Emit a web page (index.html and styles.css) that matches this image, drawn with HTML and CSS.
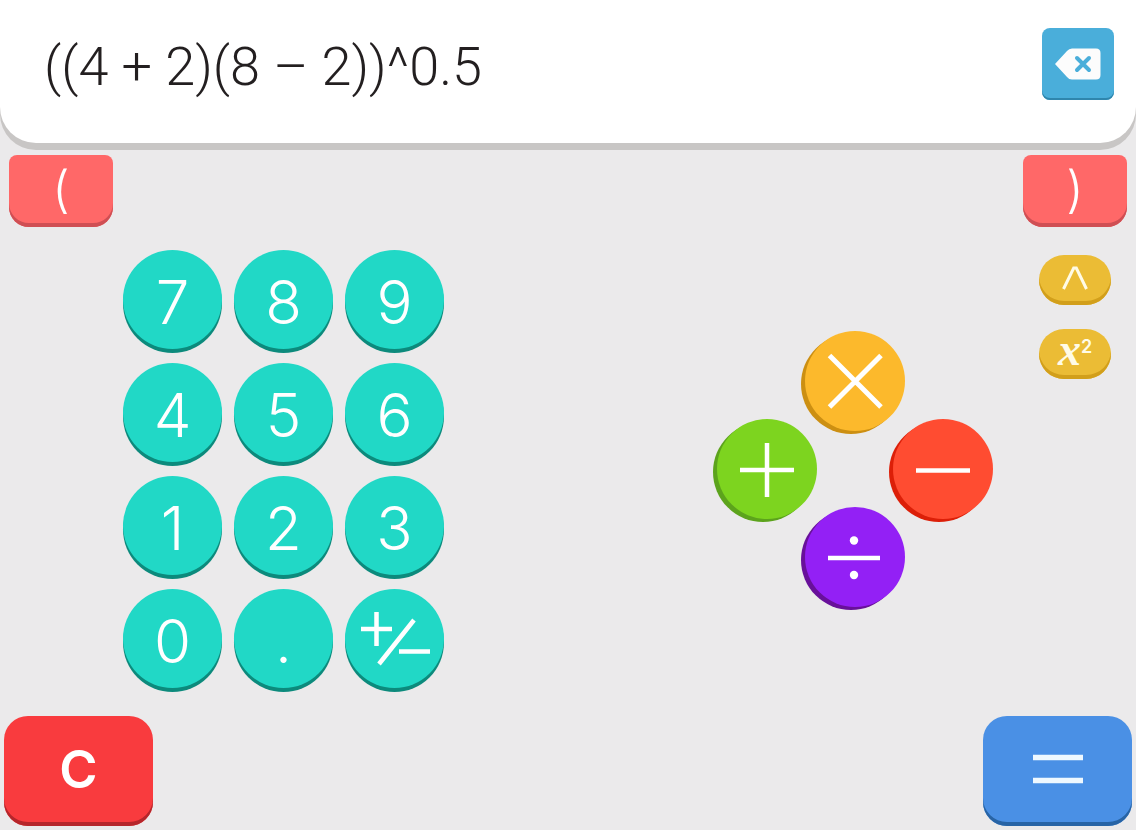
FILE: index.html
```html
<!DOCTYPE html>
<html lang="en">
<head>
  <meta charset="utf-8">
  <meta name="viewport" content="width=device-width, initial-scale=1">
  <title>Calculator</title>
  <link rel="stylesheet" href="styles.css">
</head>
<body>
  <header class="display">
    <input class="expression" type="text" value="((4 + 2)(8 – 2))^0.5" aria-label="Expression">
    <button class="backspace" aria-label="Delete">
      <svg width="46" height="32" viewBox="0 0 46 32">
        <path d="M0 16L12 3Q14 0.500 17 0.500H41Q45.500 0.500 45.500 5V27Q45.500 31.500 41 31.500H17Q14 31.500 12 29Z" fill="#fcfcfc"/>
        <path d="M22 10L34 22M34 10L22 22" stroke="#4aaeda" stroke-width="4" stroke-linecap="round"/>
      </svg>
    </button>
  </header>

  <main class="board">
    <button class="paren">(</button>

    <div class="pads">
      <div class="keypad">
        <button class="key">7</button>
        <button class="key">8</button>
        <button class="key">9</button>
        <button class="key">4</button>
        <button class="key">5</button>
        <button class="key">6</button>
        <button class="key">1</button>
        <button class="key">2</button>
        <button class="key">3</button>
        <button class="key">0</button>
        <button class="key">.</button>
        <button class="key" aria-label="Plus or minus">
          <svg width="72" height="56" viewBox="0 0 72 56">
            <path d="M2 16H33M17.500 -1V33M40 38.500H71M55 7L20 51" stroke="#fff" stroke-width="4.500" fill="none"/>
          </svg>
        </button>
      </div>

      <div class="operators">
        <button class="op times" aria-label="Multiply">
          <svg width="56" height="56" viewBox="0 0 56 56">
            <path d="M2.500 2.500L54 54M54 2.500L2.500 54" stroke="#fff" stroke-width="5"/>
          </svg>
        </button>
        <button class="op plus" aria-label="Add">
          <svg width="56" height="56" viewBox="0 0 56 56">
            <path d="M1 29H55M28 2V56" stroke="#fff" stroke-width="4.500"/>
          </svg>
        </button>
        <button class="op minus" aria-label="Subtract">
          <svg width="56" height="56" viewBox="0 0 56 56">
            <path d="M1 29.500H55" stroke="#fff" stroke-width="4.500"/>
          </svg>
        </button>
        <button class="op divide" aria-label="Divide">
          <svg width="56" height="56" viewBox="0 0 56 56">
            <path d="M1 29H53" stroke="#fff" stroke-width="4.500"/>
            <circle cx="27" cy="11.500" r="4.200" fill="#fff"/>
            <circle cx="27" cy="46" r="4.200" fill="#fff"/>
          </svg>
        </button>
      </div>
    </div>

    <div class="side">
      <button class="paren">)</button>
      <div class="powers">
        <button class="power" aria-label="Power">
          <svg width="26" height="24" viewBox="0 0 26 24">
            <path d="M1.500 23L11.700 2H14.300L24.500 23" stroke="#fffbe6" stroke-width="3" fill="none"/>
          </svg>
        </button>
        <button class="power"><i>x</i><sup>2</sup></button>
      </div>
    </div>
  </main>

  <footer class="actions">
    <button class="action clear">C</button>
    <button class="action equals" aria-label="Equals">
      <svg width="52" height="30" viewBox="0 0 52 30">
        <path d="M1 3.500H51M1 26.500H51" stroke="#eef8ff" stroke-width="5.500"/>
      </svg>
    </button>
  </footer>
</body>
</html>
```
FILE: styles.css
```css
* {
  box-sizing: border-box;
}
body {
  margin: 0;
  min-height: 100vh;
  display: flex;
  flex-direction: column;
  background: #ebeaeb;
  font-family: Inter, "Liberation Sans", sans-serif;
}
button {
  display: flex;
  align-items: center;
  justify-content: center;
  padding: 0;
  border: none;
  color: #fff;
  font-family: inherit;
  cursor: pointer;
}
.display {
  display: flex;
  align-items: center;
  gap: 20px;
  padding: 28px 22px 43px 44px;
  background: #fff;
  border-radius: 0 0 36px 36px;
  box-shadow: 0 7px #c8c6c5;
}
.expression {
  flex: 1;
  min-width: 0;
  height: 72px;
  padding: 4px 0 0;
  border: none;
  outline: none;
  background: none;
  color: #231f20;
  font-family: Roboto, "Liberation Sans", sans-serif;
  font-size: 54px;
  font-weight: 300;
}
.backspace {
  width: 72px;
  height: 72px;
  border-radius: 8px;
  background: #4aaeda;
  box-shadow: inset 0 -2px #2f86ad;
}
.board {
  display: flex;
  align-items: flex-start;
  gap: 10px;
  padding: 12px 9px;
}
.paren {
  width: 104px;
  height: 72px;
  padding-bottom: 4px;
  border-radius: 8px 8px 20px 20px;
  background: #ff6868;
  box-shadow: inset 0 -4px #cf4f54;
  font-size: 50px;
  font-weight: 300;
}
.pads {
  flex: 1;
  display: flex;
  align-items: center;
  justify-content: space-between;
  padding: 95px 26px 0 0;
}
.keypad {
  display: grid;
  grid-template-columns: repeat(3, 99px);
  gap: 14px 12px;
}
.key {
  height: 99px;
  padding-top: 4px;
  border-radius: 50%;
  background: #21d8c6;
  box-shadow: 0 4px #0c8a7c;
  font-size: 60px;
  font-weight: 300;
}
.key svg {
  overflow: visible;
}
.operators {
  display: grid;
  grid-template: repeat(3, 88px) / repeat(3, 88px);
  place-items: center;
}
.op {
  width: 100px;
  height: 100px;
  border-radius: 50%;
}
.times {
  grid-area: 1 / 2;
  background: #fcb92c;
  box-shadow: -4px 3px #cc8f12;
}
.plus {
  grid-area: 2 / 1;
  background: #7dd41f;
  box-shadow: -4px 3px #5ca31c;
}
.minus {
  grid-area: 2 / 3;
  background: #ff4c31;
  box-shadow: -4px 3px #dc1f08;
}
.divide {
  grid-area: 3 / 2;
  background: #9320f5;
  box-shadow: -4px 3px #68109a;
}
.powers {
  display: flex;
  flex-direction: column;
  align-items: center;
  gap: 24px;
  padding-top: 28px;
}
.power {
  width: 72px;
  height: 50px;
  padding-bottom: 4px;
  border-radius: 25px;
  background: #ebbc35;
  box-shadow: inset 0 -4px #d29f1b;
  color: #fffbe6;
}
.power i {
  font: italic bold 46px/40px "Liberation Serif", serif;
  padding-bottom: 4px;
}
.power sup {
  font-size: 18px;
  font-weight: 600;
  padding-bottom: 12px;
}
.actions {
  display: flex;
  justify-content: space-between;
  margin-top: auto;
  padding: 4px;
}
.action {
  width: 149px;
  height: 110px;
  padding-bottom: 4px;
  border-radius: 24px;
}
.clear {
  background: #f93b3e;
  box-shadow: inset 0 -4px #b5262b;
  font-size: 52px;
  font-weight: 600;
}
.equals {
  background: #4a90e5;
  box-shadow: inset 0 -4px #2864a5;
}
```
